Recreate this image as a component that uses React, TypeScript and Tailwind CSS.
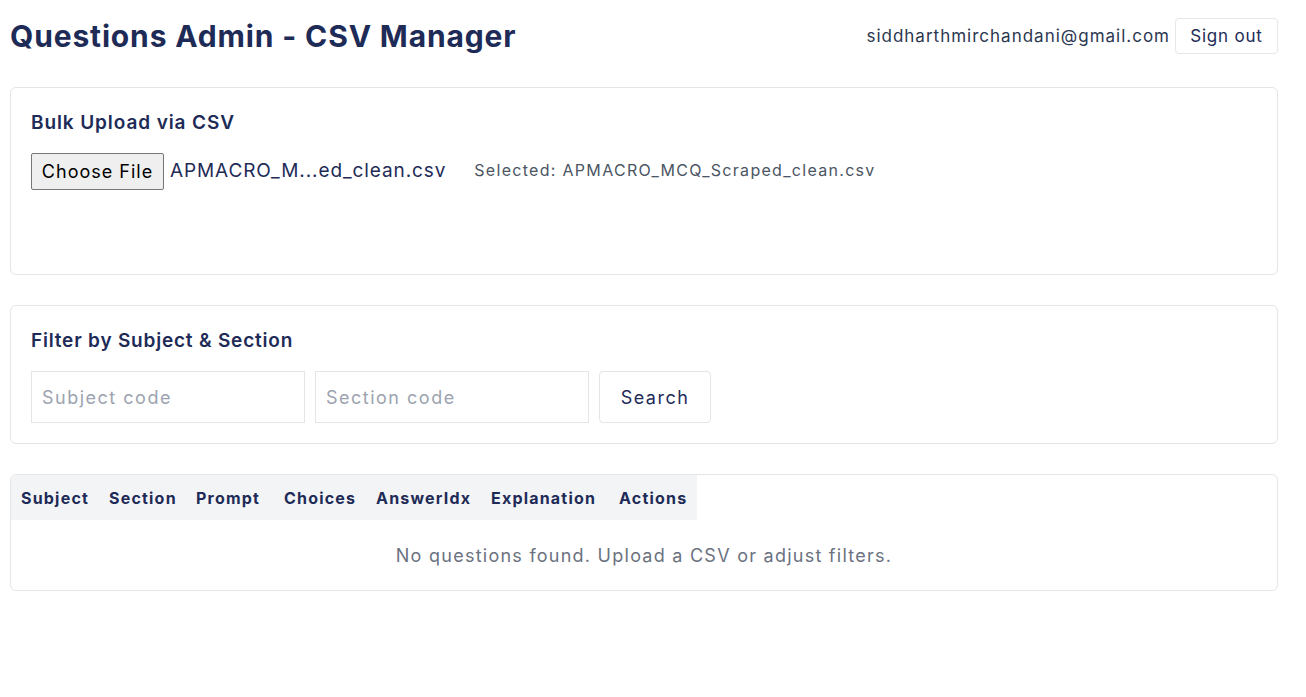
import React from "react";

const navy = "text-[#1e2b57]";

export default function App() {
  const headers: [string, string][] = [
    ["Subject", "w-[88px]"],
    ["Section", "w-[87px]"],
    ["Prompt", "w-[88px]"],
    ["Choices", "w-[92px]"],
    ["AnswerIdx", "w-[115px]"],
    ["Explanation", "w-[128px]"],
    ["Actions", "w-[88px]"],
  ];
  return (
    <div
      className="min-h-[697px] bg-white"
      style={{ fontFamily: "Inter, 'Noto Sans', sans-serif" }}
    >
      <div className="ml-[10px] w-[1268px] pt-[18px]">
        {/* header */}
        <div className="flex items-center justify-between h-[36px]">
          <h1 className={`text-[30px] font-bold ${navy} tracking-[0.85px] leading-none`}>
            Questions Admin - CSV Manager
          </h1>
          <div className="flex items-center gap-[5px]">
            <span className="pt-[2px] text-[17px] text-[#2b3650] tracking-[1px]">
              siddharthmirchandani@gmail.com
            </span>
            <button className="h-[36px] w-[103px] rounded-[4px] border border-[#e5e7eb] bg-white pt-[2px] text-[17px] tracking-[0.8px] text-[#1e2b57]">
              Sign out
            </button>
          </div>
        </div>

        {/* upload card */}
        <div className="mt-[33px] h-[188px] rounded-[6px] border border-[#e5e5e5] px-[20px] pt-[22px]">
          <h2 className={`text-[19px] font-semibold ${navy} leading-[26px] tracking-[0.9px]`}>Bulk Upload via CSV</h2>
          <div className="mt-[17px] flex items-center">
            <button
              className="h-[37px] w-[133px] rounded-[2px] border border-[#767676] bg-[#efefef] text-[18px] text-black tracking-[1px]"
            >
              Choose File
            </button>
            <span className="ml-[6px] text-[19px] text-[#1e2b57] tracking-[0.9px]">APMACRO_M...ed_clean.csv</span>
            <span className="ml-[28px] pb-[3px] text-[16px] text-[#4b5563] tracking-[1.3px]">
              Selected: APMACRO_MCQ_Scraped_clean.csv
            </span>
          </div>
        </div>

        {/* filter card */}
        <div className="mt-[30px] h-[139px] rounded-[6px] border border-[#e5e5e5] px-[20px] pt-[21px]">
          <h2 className={`text-[19px] font-semibold ${navy} leading-[28px] tracking-[0.8px]`}>Filter by Subject &amp; Section</h2>
          <div className="mt-[16px] flex items-center gap-[10px]">
            <input
              placeholder="Subject code"
              className="h-[52px] w-[274px] border border-[#e5e5e5] px-[10px] text-[18px] tracking-[1.5px] placeholder:text-[#9ca3af] outline-none"
            />
            <input
              placeholder="Section code"
              className="h-[52px] w-[274px] border border-[#e5e5e5] px-[10px] text-[18px] tracking-[1.5px] placeholder:text-[#9ca3af] outline-none"
            />
            <button className="h-[52px] w-[112px] rounded-[4px] border border-[#e5e5e5] bg-white text-[18px] tracking-[1.5px] text-[#1e2b57]">
              Search
            </button>
          </div>
        </div>

        {/* table card */}
        <div className="mt-[30px] h-[117px] rounded-[6px] border border-[#e5e5e5]">
          <div className="flex">
            <div className="flex h-[45px] items-center bg-[#f3f4f6]">
              {headers.map(([h, w]) => (
                <div key={h} className={`${w} px-[10px] text-[16px] font-bold tracking-[1.2px] ${navy}`}>
                  {h}
                </div>
              ))}
            </div>
          </div>
          <div className="flex h-[70px] items-center justify-center text-[18px] tracking-[1.25px] text-[#6b7280]">
            No questions found. Upload a CSV or adjust filters.
          </div>
        </div>
      </div>
    </div>
  );
}
